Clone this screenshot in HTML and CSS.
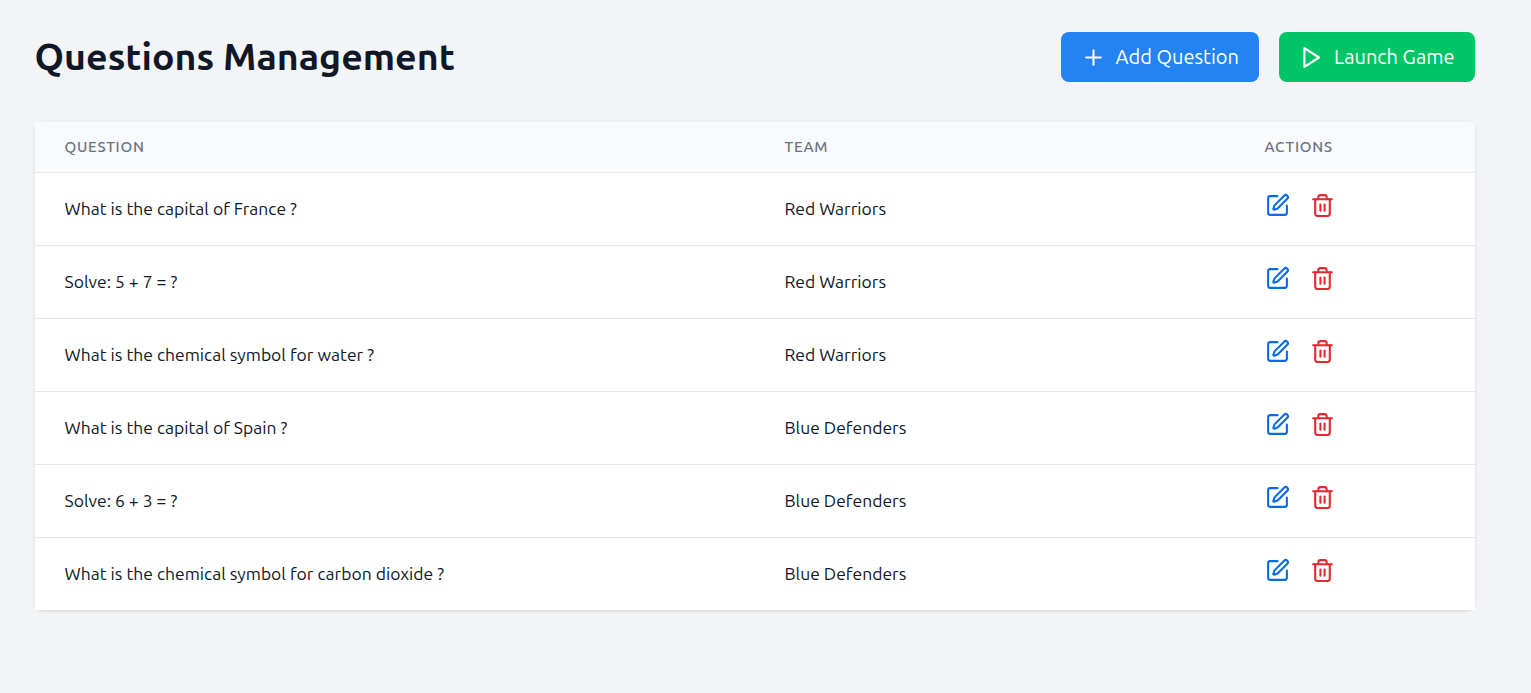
FILE: index.html
```html
<!DOCTYPE html>
<html lang="en">
<head>
<meta charset="utf-8">
<title>Questions Management</title>
<link rel="stylesheet" href="styles.css">
</head>
<body>
<svg class="sprite" aria-hidden="true">
  <symbol id="edit" viewBox="0 0 24 24"><path d="M12 3H5a2 2 0 0 0-2 2v14a2 2 0 0 0 2 2h14a2 2 0 0 0 2-2v-7"/><path d="M18.375 2.625a1 1 0 0 1 3 3l-9.013 9.014a2 2 0 0 1-.853.505l-2.873.84a.5.5 0 0 1-.62-.62l.84-2.873a2 2 0 0 1 .506-.852z"/></symbol>
  <symbol id="trash" viewBox="0 0 24 24"><path d="M3 6h18"/><path d="M19 6v14c0 1-1 2-2 2H7c-1 0-2-1-2-2V6"/><path d="M8 6V4c0-1 1-2 2-2h4c1 0 2 1 2 2v2"/><path d="M10 11v6"/><path d="M14 11v6"/></symbol>
</svg>
<header class="header">
  <h1 class="title"><span>Questions Management</span></h1>
  <div class="buttons">
    <button class="button add"><svg class="icon" viewBox="0 0 24 24"><path d="M5 12h14M12 5v14"/></svg><span class="label">Add Question</span></button>
    <button class="button launch"><svg class="icon" viewBox="0 0 24 24"><path d="M5.2 3l14 9-14 9z"/></svg><span class="label">Launch Game</span></button>
  </div>
</header>
<main class="card">
  <div class="row head"><span class="cell">QUESTION</span><span class="cell">TEAM</span><span class="cell">ACTIONS</span></div>
  <div class="row"><span class="cell">What is the capital of France ?</span><span class="cell">Red Warriors</span><span class="actions"><svg class="icon edit"><use href="#edit"/></svg><svg class="icon trash"><use href="#trash"/></svg></span></div>
  <div class="row"><span class="cell">Solve: 5 + 7 = ?</span><span class="cell">Red Warriors</span><span class="actions"><svg class="icon edit"><use href="#edit"/></svg><svg class="icon trash"><use href="#trash"/></svg></span></div>
  <div class="row"><span class="cell">What is the chemical symbol for water ?</span><span class="cell">Red Warriors</span><span class="actions"><svg class="icon edit"><use href="#edit"/></svg><svg class="icon trash"><use href="#trash"/></svg></span></div>
  <div class="row"><span class="cell">What is the capital of Spain ?</span><span class="cell">Blue Defenders</span><span class="actions"><svg class="icon edit"><use href="#edit"/></svg><svg class="icon trash"><use href="#trash"/></svg></span></div>
  <div class="row"><span class="cell">Solve: 6 + 3 = ?</span><span class="cell">Blue Defenders</span><span class="actions"><svg class="icon edit"><use href="#edit"/></svg><svg class="icon trash"><use href="#trash"/></svg></span></div>
  <div class="row"><span class="cell">What is the chemical symbol for carbon dioxide ?</span><span class="cell">Blue Defenders</span><span class="actions"><svg class="icon edit"><use href="#edit"/></svg><svg class="icon trash"><use href="#trash"/></svg></span></div>
</main>
</body>
</html>
```
FILE: styles.css
```css
* { box-sizing: border-box; }
body {
  margin: 0;
  min-height: 100vh;
  padding: 32px 56px 0 35px;
  background: #f3f4f6;
  color: #101828;
  font-family: Ubuntu, "Noto Sans", sans-serif;
}
.sprite { display: none; }
.icon {
  width: 25px;
  height: 25px;
  flex: none;
  fill: none;
  stroke: currentColor;
  stroke-width: 2;
  stroke-linecap: round;
  stroke-linejoin: round;
}
.header { display: flex; justify-content: space-between; align-items: center; height: 50px; }
.title { margin: 0 0 2px -.4px; font-size: 37.5px; line-height: 48px; font-weight: 600; white-space: nowrap; }
.buttons { display: flex; gap: 20px; }
.button {
  display: flex;
  align-items: center;
  gap: 9.5px;
  height: 50px;
  padding: 0 20px;
  border: 0;
  border-radius: 8px;
  color: #fff;
  font-family: inherit;
  font-size: 20px;
  font-weight: 400;
  white-space: nowrap;
}
.label { padding-bottom: 2px; }
.add { width: 198px; background: #2383f3; }
.launch { width: 196px; gap: 10px; background: #00c566; }
.card {
  margin-top: 40px;
  border-radius: 8px;
  box-shadow: 0 1px 4px rgba(0, 0, 0, .1), 0 1px 2px -1px rgba(0, 0, 0, .1);
}
.row {
  display: grid;
  grid-template-columns: 720px 480px 240px;
  height: 73px;
  border-bottom: 1px solid #e5e7eb;
  background: #fff;
  font-size: 17.5px;
  line-height: 72px;
}
.row:last-child { height: 72px; border-bottom: 0; }
.cell { padding-left: 29.5px; white-space: nowrap; }
.head {
  height: 51px;
  background: #f9fafb;
  color: #6a7282;
  font-size: 15px;
  font-weight: 500;
  line-height: 50px;
  letter-spacing: .75px;
}
.actions { display: flex; gap: 20px; padding: 20px 0 0 30px; }
.edit { color: #076be8; }
.trash { color: #e52730; }
```
